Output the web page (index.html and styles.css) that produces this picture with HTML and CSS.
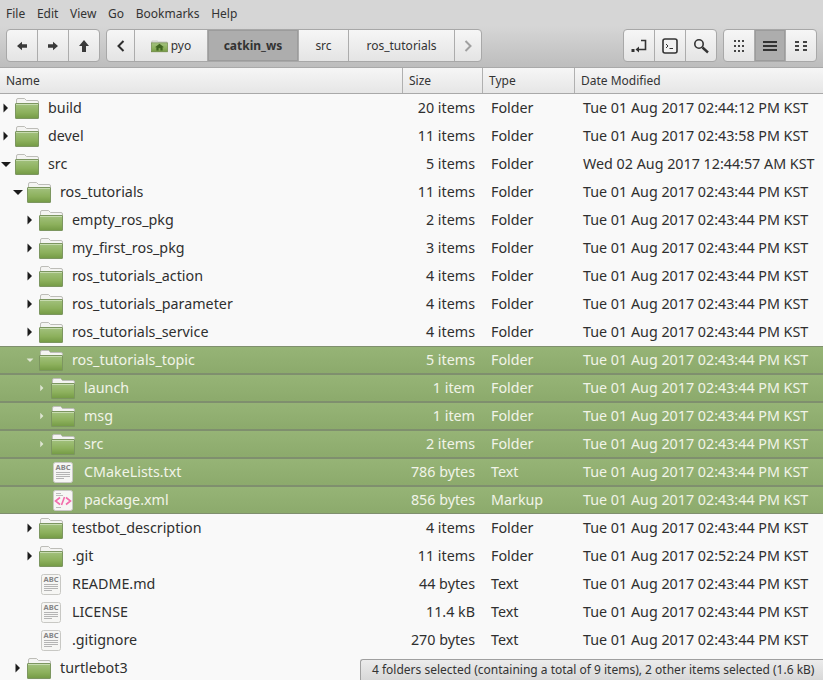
FILE: index.html
```html
<!DOCTYPE html>
<html lang="en">
<head>
    <meta charset="UTF-8">
    <title>catkin_ws</title>
    <link rel="stylesheet" href="styles.css">
</head>
<body>
    <svg class="defs" width="0" height="0">
        <defs>
            <linearGradient id="folder-green" x1="0" y1="0" x2="0" y2="1">
                <stop offset="0" stop-color="#a3c27f"/>
                <stop offset="0.6" stop-color="#8cb05c"/>
                <stop offset="1" stop-color="#749a45"/>
            </linearGradient>
            <symbol id="folder" viewBox="0 0 24 21">
                <path d="M1.500 6V2Q1.500 .5 3 .5H9.500L11.500 2.500H22Q23.500 2.500 23.500 4V6Z" fill="#f4f4f2" stroke="#bdbdb8"/>
                <rect x="0.500" y="5.500" width="23" height="15" rx="0.500" fill="url(#folder-green)" stroke="#7c9660"/>
                <path d="M1 6.500H23" stroke="#c7dbb0"/>
            </symbol>
            <symbol id="text-file" viewBox="0 0 20 21">
                <rect x="0.500" y="0.500" width="19" height="20" rx="2" fill="#f6f6f4" stroke="#c8c8c4"/>
                <text x="10" y="8" class="abc">ABC</text>
                <path d="M3 10.500H17M3 12.500H17M3 14.500H17M3 16.500H11" stroke="#b4b4b4"/>
            </symbol>
            <symbol id="xml-file" viewBox="0 0 20 21">
                <rect x="0.500" y="0.500" width="19" height="20" rx="2" fill="#f6f6f4" stroke="#c8c8c4"/>
                <path d="M3 3.500H8M3 5.500H10M3 17.500H8" stroke="#bcbcbc"/>
                <path d="M7 7.500L2.500 11L7 14.500M13 7.500L17.500 11L13 14.500M11.500 7L8.500 15" fill="none" stroke="#f26cab" stroke-width="1.600"/>
            </symbol>
            <symbol id="arrow-open" viewBox="0 0 10 10"><path d="M0 3H10L5 8Z"/></symbol>
            <symbol id="arrow-closed" viewBox="0 0 10 10"><path d="M2.500 .5V9.500L7 5Z"/></symbol>
        </defs>
    </svg>

    <nav class="menubar">
        <span>File</span><span>Edit</span><span>View</span><span>Go</span><span>Bookmarks</span><span>Help</span>
    </nav>

    <div class="toolbar">
        <div class="btn-group group-3">
            <button class="btn"><svg width="12" height="10" viewBox="0 0 14 12"><path d="M1 6L7 1V4H13V8H7V11Z"/></svg></button>
            <button class="btn"><svg width="12" height="10" viewBox="0 0 14 12"><path d="M13 6L7 1V4H1V8H7V11Z"/></svg></button>
            <button class="btn"><svg width="12" height="14" viewBox="0 0 12 14"><path d="M6 1L11 7H8V13H4V7H1Z"/></svg></button>
        </div>
        <div class="btn-group path-group">
            <button class="btn btn-back"><svg width="8" height="12" viewBox="0 0 8 12"><path d="M6.500 1L1.500 6L6.500 11" fill="none" stroke="#2e2e2e" stroke-width="2"/></svg></button>
            <button class="btn btn-pyo">
                <svg width="17" height="14" viewBox="0 0 19 14">
                    <path d="M1 4V1.500H7L8 2.500H18V4Z" fill="#eee" stroke="#b4b4ae" stroke-width="0.700"/>
                    <rect x="0.500" y="3.500" width="18" height="10" fill="url(#folder-green)" stroke="#68823f" stroke-width="0.700"/>
                    <path d="M9.500 4.500L14.500 8.500H13V12H10.500V9.500H8.500V12H6V8.500H4.500Z" fill="#3f6420"/>
                </svg>
                pyo
            </button>
            <button class="btn btn-catkin active">catkin_ws</button>
            <button class="btn btn-src">src</button>
            <button class="btn btn-ros">ros_tutorials</button>
            <button class="btn btn-forward"><svg width="8" height="12" viewBox="0 0 8 12"><path d="M1.500 1L6.500 6L1.500 11" fill="none" stroke="#a0a0a0" stroke-width="2"/></svg></button>
        </div>
        <div class="toolbar-right">
            <div class="btn-group group-3">
                <button class="btn">
                    <svg width="16" height="14" viewBox="0 0 16 14"><rect x="0.500" y="10" width="3" height="3" fill="#333"/><path d="M10 1.500H14.500V10.500H6" fill="none" stroke="#333" stroke-width="1.600"/><path d="M8 7.500L4.500 10.500L8 13.500Z" fill="#333"/></svg>
                </button>
                <button class="btn">
                    <svg width="16" height="16" viewBox="0 0 16 16"><rect x="1" y="1" width="14" height="14" rx="2" fill="#f2f2f2" stroke="#333" stroke-width="1.600"/><path d="M4 6L6 8L4 10M7.500 10.500H11" fill="none" stroke="#333"/></svg>
                </button>
                <button class="btn">
                    <svg width="16" height="16" viewBox="0 0 16 16"><circle cx="6" cy="6" r="4.200" fill="none" stroke="#333" stroke-width="1.600"/><path d="M9.500 9.500L15 14.500" stroke="#333" stroke-width="2.400"/></svg>
                </button>
            </div>
            <div class="btn-group group-3">
                <button class="btn">
                    <svg width="12" height="12" viewBox="0 0 12 12"><path d="M1 0h2v2H1zM5 0h2v2H5zM9 0h2v2H9zM1 5h2v2H1zM5 5h2v2H5zM9 5h2v2H9zM1 10h2v2H1zM5 10h2v2H5zM9 10h2v2H9z" fill="#444"/></svg>
                </button>
                <button class="btn active">
                    <svg width="14" height="12" viewBox="0 0 14 12"><path d="M0 1h14v2H0zM0 5h14v2H0zM0 9h14v2H0z" fill="#333"/></svg>
                </button>
                <button class="btn">
                    <svg width="14" height="12" viewBox="0 0 14 12"><path d="M1 1h4v2H1zM9 1h4v2H9zM1 5h4v2H1zM9 5h4v2H9zM1 9h4v2H1zM9 9h4v2H9z" fill="#444"/></svg>
                </button>
            </div>
        </div>
    </div>

    <div class="columns">
        <div class="col col-name">Name</div>
        <div class="col col-size">Size</div>
        <div class="col col-type">Type</div>
        <div class="col col-date">Date Modified</div>
    </div>

    <div class="tree">
        <div class="row lvl-0"><svg class="arrow"><use href="#arrow-closed"/></svg><svg class="icon"><use href="#folder"/></svg><span class="name">build</span><span class="size">20 items</span><span class="type">Folder</span><span class="date">Tue 01 Aug 2017 02:44:12 PM KST</span></div>
        <div class="row lvl-0"><svg class="arrow"><use href="#arrow-closed"/></svg><svg class="icon"><use href="#folder"/></svg><span class="name">devel</span><span class="size">11 items</span><span class="type">Folder</span><span class="date">Tue 01 Aug 2017 02:43:58 PM KST</span></div>
        <div class="row lvl-0"><svg class="arrow"><use href="#arrow-open"/></svg><svg class="icon"><use href="#folder"/></svg><span class="name">src</span><span class="size">5 items</span><span class="type">Folder</span><span class="date">Wed 02 Aug 2017 12:44:57 AM KST</span></div>
        <div class="row lvl-1"><svg class="arrow"><use href="#arrow-open"/></svg><svg class="icon"><use href="#folder"/></svg><span class="name">ros_tutorials</span><span class="size">11 items</span><span class="type">Folder</span><span class="date">Tue 01 Aug 2017 02:43:44 PM KST</span></div>
        <div class="row lvl-2"><svg class="arrow"><use href="#arrow-closed"/></svg><svg class="icon"><use href="#folder"/></svg><span class="name">empty_ros_pkg</span><span class="size">2 items</span><span class="type">Folder</span><span class="date">Tue 01 Aug 2017 02:43:44 PM KST</span></div>
        <div class="row lvl-2"><svg class="arrow"><use href="#arrow-closed"/></svg><svg class="icon"><use href="#folder"/></svg><span class="name">my_first_ros_pkg</span><span class="size">3 items</span><span class="type">Folder</span><span class="date">Tue 01 Aug 2017 02:43:44 PM KST</span></div>
        <div class="row lvl-2"><svg class="arrow"><use href="#arrow-closed"/></svg><svg class="icon"><use href="#folder"/></svg><span class="name">ros_tutorials_action</span><span class="size">4 items</span><span class="type">Folder</span><span class="date">Tue 01 Aug 2017 02:43:44 PM KST</span></div>
        <div class="row lvl-2"><svg class="arrow"><use href="#arrow-closed"/></svg><svg class="icon"><use href="#folder"/></svg><span class="name">ros_tutorials_parameter</span><span class="size">4 items</span><span class="type">Folder</span><span class="date">Tue 01 Aug 2017 02:43:44 PM KST</span></div>
        <div class="row lvl-2"><svg class="arrow"><use href="#arrow-closed"/></svg><svg class="icon"><use href="#folder"/></svg><span class="name">ros_tutorials_service</span><span class="size">4 items</span><span class="type">Folder</span><span class="date">Tue 01 Aug 2017 02:43:44 PM KST</span></div>
        <div class="row lvl-2 selected"><svg class="arrow"><use href="#arrow-open"/></svg><svg class="icon"><use href="#folder"/></svg><span class="name">ros_tutorials_topic</span><span class="size">5 items</span><span class="type">Folder</span><span class="date">Tue 01 Aug 2017 02:43:44 PM KST</span></div>
        <div class="row lvl-3 selected"><svg class="arrow"><use href="#arrow-closed"/></svg><svg class="icon"><use href="#folder"/></svg><span class="name">launch</span><span class="size">1 item</span><span class="type">Folder</span><span class="date">Tue 01 Aug 2017 02:43:44 PM KST</span></div>
        <div class="row lvl-3 selected"><svg class="arrow"><use href="#arrow-closed"/></svg><svg class="icon"><use href="#folder"/></svg><span class="name">msg</span><span class="size">1 item</span><span class="type">Folder</span><span class="date">Tue 01 Aug 2017 02:43:44 PM KST</span></div>
        <div class="row lvl-3 selected"><svg class="arrow"><use href="#arrow-closed"/></svg><svg class="icon"><use href="#folder"/></svg><span class="name">src</span><span class="size">2 items</span><span class="type">Folder</span><span class="date">Tue 01 Aug 2017 02:43:44 PM KST</span></div>
        <div class="row lvl-3 selected"><span class="arrow"></span><svg class="icon"><use href="#text-file"/></svg><span class="name">CMakeLists.txt</span><span class="size">786 bytes</span><span class="type">Text</span><span class="date">Tue 01 Aug 2017 02:43:44 PM KST</span></div>
        <div class="row lvl-3 selected"><span class="arrow"></span><svg class="icon"><use href="#xml-file"/></svg><span class="name">package.xml</span><span class="size">856 bytes</span><span class="type">Markup</span><span class="date">Tue 01 Aug 2017 02:43:44 PM KST</span></div>
        <div class="row lvl-2"><svg class="arrow"><use href="#arrow-closed"/></svg><svg class="icon"><use href="#folder"/></svg><span class="name">testbot_description</span><span class="size">4 items</span><span class="type">Folder</span><span class="date">Tue 01 Aug 2017 02:43:44 PM KST</span></div>
        <div class="row lvl-2"><svg class="arrow"><use href="#arrow-closed"/></svg><svg class="icon"><use href="#folder"/></svg><span class="name">.git</span><span class="size">11 items</span><span class="type">Folder</span><span class="date">Tue 01 Aug 2017 02:52:24 PM KST</span></div>
        <div class="row lvl-2"><span class="arrow"></span><svg class="icon"><use href="#text-file"/></svg><span class="name">README.md</span><span class="size">44 bytes</span><span class="type">Text</span><span class="date">Tue 01 Aug 2017 02:43:44 PM KST</span></div>
        <div class="row lvl-2"><span class="arrow"></span><svg class="icon"><use href="#text-file"/></svg><span class="name">LICENSE</span><span class="size">11.4 kB</span><span class="type">Text</span><span class="date">Tue 01 Aug 2017 02:43:44 PM KST</span></div>
        <div class="row lvl-2"><span class="arrow"></span><svg class="icon"><use href="#text-file"/></svg><span class="name">.gitignore</span><span class="size">270 bytes</span><span class="type">Text</span><span class="date">Tue 01 Aug 2017 02:43:44 PM KST</span></div>
        <div class="row lvl-1"><svg class="arrow"><use href="#arrow-closed"/></svg><svg class="icon"><use href="#folder"/></svg><span class="name">turtlebot3</span><span class="size"></span><span class="type"></span><span class="date"></span></div>
    </div>

    <div class="statusbar">4 folders selected (containing a total of 9 items), 2 other items selected (1.6 kB)</div>
</body>
</html>
```

FILE: styles.css
```css
html, body {
    height: 100%;
}
body {
    margin: 0;
    position: relative;
    overflow: hidden;
    background-color: #f9f9f9;
    color: #2f2f2f;
    font-family: "Noto Sans", sans-serif;
    font-size: 14.3px;
}
.defs {
    position: absolute;
}
.abc {
    font-family: "Noto Sans", sans-serif;
    font-size: 7.500px;
    font-weight: bold;
    text-anchor: middle;
    fill: #858585;
}

/* Menu */
.menubar {
    display: flex;
    gap: 11.700px;
    height: 26px;
    padding-left: 6px;
    align-items: center;
    background-color: #d6d6d6;
    font-size: 12px;
    color: #333;
}

/* Toolbar */
.toolbar {
    display: flex;
    height: 42px;
    padding: 3px 6px 0 6px;
    box-sizing: border-box;
    gap: 6px;
    background: linear-gradient(#d6d6d6, #bdbdbd);
    border-bottom: 1px solid #a9a9a9;
}
.toolbar-right {
    display: flex;
    gap: 6px;
    margin-left: auto;
}
.btn-group {
    display: flex;
    height: 33px;
    border: 1px solid #a8a8a8;
    border-radius: 4px;
    box-sizing: border-box;
    overflow: hidden;
    background: linear-gradient(#f6f6f6, #e4e4e4);
}
.group-3 {
    width: 94px;
}
.group-3 .btn {
    flex: 1;
}
.btn {
    display: flex;
    align-items: center;
    justify-content: center;
    gap: 3px;
    padding: 0;
    border: 0;
    border-left: 1px solid #acacac;
    background: none;
    color: #333;
    font-family: inherit;
    font-size: 12px;
    box-sizing: border-box;
}
.btn:first-child {
    border-left: 0;
}
.btn svg {
    fill: #3a3a3a;
}
.btn.active {
    background: #adadad;
    box-shadow: inset 0 0 0 1px #9c9c9c;
    font-weight: bold;
}
.btn-back { width: 27px; }
.btn-pyo { width: 73px; }
.btn-catkin { width: 91px; }
.btn-src { width: 50px; }
.btn-ros { width: 106px; }
.btn-forward { width: 27px; }

/* Column headers */
.columns {
    display: flex;
    height: 26px;
    box-sizing: border-box;
    background: linear-gradient(#f6f6f6, #e6e6e6);
    border-bottom: 1px solid #a9a9a9;
    font-size: 12px;
    color: #333;
}
.col {
    display: flex;
    align-items: center;
    padding-left: 6px;
    box-sizing: border-box;
    border-left: 1px solid #b0b0b0;
}
.col-name { width: 402px; border-left: 0; }
.col-size { width: 80px; }
.col-type { width: 92px; }
.col-date { flex: 1; }

/* Tree rows */
.tree {
    display: flex;
    flex-direction: column;
}
.row {
    display: flex;
    align-items: center;
    flex: none;
    height: 28px;
    box-sizing: border-box;
}
.arrow {
    flex: none;
    width: 10px;
    height: 10px;
    margin-right: 4px;
    fill: #1c1c1c;
}
.icon {
    flex: none;
    width: 24px;
    height: 21px;
    margin-right: 9px;
}
.lvl-0 { padding-left: 1px; }
.lvl-1 { padding-left: 13px; }
.lvl-2 { padding-left: 25px; }
.lvl-3 { padding-left: 37px; }
.name {
    flex: 1;
    min-width: 0;
    margin-bottom: 2px;
}
.size {
    width: 72px;
    padding-right: 8px;
    text-align: right;
    flex: none;
    white-space: nowrap;
    margin-bottom: 2px;
}
.type {
    width: 92px;
    padding-left: 8px;
    box-sizing: border-box;
    flex: none;
    margin-bottom: 2px;
}
.date {
    width: 248px;
    padding-left: 8px;
    box-sizing: border-box;
    flex: none;
    white-space: nowrap;
    margin-bottom: 2px;
}
.row.selected {
    background: linear-gradient(#96b476, #8caa6c);
    border-top: 1px solid #7f8f6e;
    border-bottom: 1px solid #7f8f6e;
    color: #f1f4e8;
}
.selected .arrow {
    fill: #dfe6d4;
    transform: scale(0.7);
}

/* Floating status */
.statusbar {
    position: absolute;
    left: 360px;
    right: 0;
    bottom: 0;
    height: 21px;
    box-sizing: border-box;
    padding: 1px 0 0 11px;
    background: linear-gradient(#ececec, #d8d8d8);
    border: 1px solid #a0a0a0;
    border-width: 1px 0 0 1px;
    border-radius: 3px 0 0 0;
    font-size: 12px;
    white-space: nowrap;
    color: #333;
}
```
